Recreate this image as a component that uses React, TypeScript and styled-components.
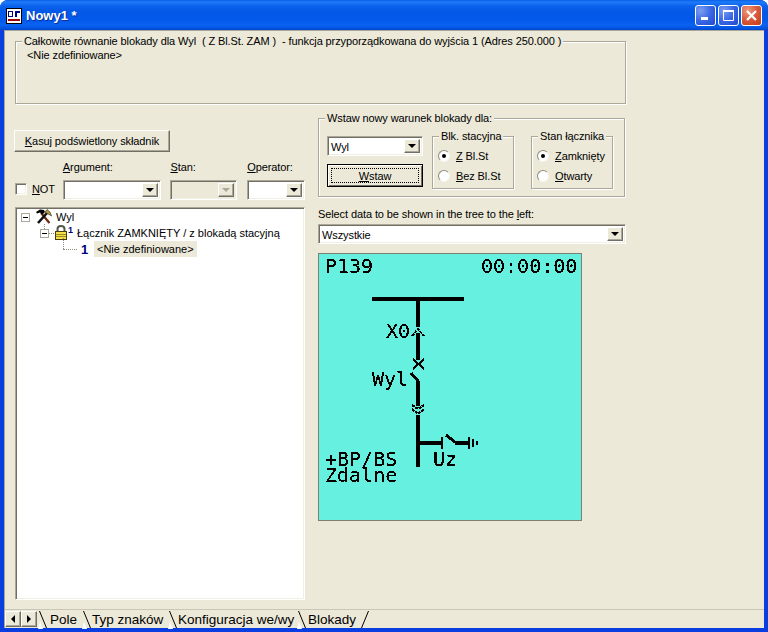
import React from "react";
import styled, { createGlobalStyle } from "styled-components";

const Global = createGlobalStyle`
  html, body { margin: 0; padding: 0; background: #fff; overflow: hidden; }
  #root { width: 768px; height: 632px; }
  * { box-sizing: border-box; }
`;

const Window = styled.div`
  width: 768px; height: 632px; display: flex; flex-direction: column;
  background: #0a3ee0; border-radius: 8px 8px 0 0; overflow: hidden;
  font: 11px "Liberation Sans", Arial, sans-serif; letter-spacing: -0.1px; color: #000;
`;
const TitleBar = styled.div`
  height: 30px; flex: none; display: flex; align-items: center; padding: 0 6px 0 6px;
  background: linear-gradient(180deg, #0a5fe8 0, #1d7bf6 2px, #1a76f5 3px, #0a62ec 6px, #0358e6 12px, #0359ea 20px, #0a63f2 25px, #0050dc 29px, #003fc4 30px);
`;
const AppIcon = styled.svg` width: 16px; height: 16px; flex: none; margin-top: 2px; `;
const Title = styled.div`
  flex: 1; margin-left: 4px; color: #fff; font: bold 13px "Liberation Sans", Arial, sans-serif; letter-spacing: 0;
  text-shadow: 1px 1px 0 #0a2f9c;
`;
const Controls = styled.div` display: flex; gap: 2px; margin-top: 1px; `;
const CtlBtn = styled.div<{ $close?: boolean }>`
  width: 21px; height: 21px; border: 1px solid #fff; border-radius: 3px;
  display: flex; align-items: center; justify-content: center;
  background: ${p => p.$close
    ? "radial-gradient(circle at 30% 25%, #ec9a80 0, #d8593a 50%, #c23a18 100%)"
    : "radial-gradient(circle at 25% 25%, #7c9df0 0, #3a68e4 50%, #2148cf 100%)"};
`;
const Client = styled.div`
  flex: 1; min-height: 0; margin: 0 4px 4px; display: flex; flex-direction: column;
  background: #ece9d8; border-top: 1px solid #a9a799; border-left: 1px solid #a9a799;
  padding: 10px 0 0 10px;
`;
const Group = styled.div`
  position: relative; border: 1px solid #aca899; box-shadow: 1px 1px 0 #fff, inset 1px 1px 0 #fff;
`;
const Legend = styled.span`
  position: absolute; top: -8px; left: 6px; padding: 0 2px; background: #ece9d8; white-space: pre; line-height: 14px;
`;
const SummaryGroup = styled(Group)`
  width: 611px; height: 63px; padding: 6px 0 0 11px; line-height: 14px; flex: none;
`;
const Body = styled.div` flex: 1; min-height: 0; display: flex; gap: 13px; padding-top: 14px; `;
const LeftCol = styled.div` width: 290px; display: flex; flex-direction: column; padding: 12px 0 9px; `;
const RightCol = styled.div` width: 308px; display: flex; flex-direction: column; `;
const Raised = styled.button`
  font: inherit; letter-spacing: inherit; color: #000; background: #ece9d8; padding: 0; margin: 0;
  border: 1px solid; border-color: #fff #716f64 #716f64 #fff;
  box-shadow: inset -1px -1px 0 #aca899;
`;
const DeleteBtn = styled(Raised)` width: 156px; height: 22px; margin-left: -1px; flex: none; `;
const Key = styled.span` text-decoration: underline; `;
const FieldRow = styled.div` display: flex; align-items: flex-end; margin-top: 8px; flex: none; `;
const NotBox = styled.div` width: 48px; height: 22px; display: flex; align-items: center; gap: 5px; `;
const Check = styled.div`
  width: 12px; height: 12px; flex: none; background: #fff; border: 1px solid; border-color: #aca899 #fff #fff #aca899;
  box-shadow: inset 1px 1px 0 #716f64, inset -1px -1px 0 #f1efe2;
`;
const Field = styled.div<{ $w: number }>` width: ${p => p.$w}px; display: flex; flex-direction: column; gap: 6px; `;
const FieldLabel = styled.div` height: 14px; line-height: 14px; `;
const Combo = styled.div<{ $w?: string; $off?: boolean }>`
  width: ${p => p.$w ?? "100%"}; height: 20px; display: flex; align-items: stretch; flex: none;
  background: ${p => p.$off ? "#ece9d8" : "#fff"}; padding: 2px; line-height: 16px;
  border: 1px solid; border-color: #aca899 #fff #fff #aca899;
  box-shadow: inset 1px 1px 0 #716f64, inset -1px -1px 0 #f1efe2;
`;
const WideCombo = styled(Combo)` margin-top: 3px; `;
const ComboText = styled.div` flex: 1; padding-left: 1px; `;
const ComboArrow = styled.div<{ $off?: boolean }>`
  width: 16px; flex: none; background: #ece9d8; display: flex; align-items: center; justify-content: center;
  border: 1px solid; border-color: #fff #716f64 #716f64 #fff; box-shadow: inset -1px -1px 0 #aca899;
  &::after { content: ""; border: 4px solid transparent; border-bottom: 0; border-top: 4px solid ${p => p.$off ? "#aca899" : "#000"}; }
`;
const Tree = styled.div`
  flex: 1; margin-top: 7px; background: #fff; padding: 1px 0 0 0; line-height: 16px;
  border: 1px solid; border-color: #aca899 #fff #fff #aca899;
  box-shadow: inset 1px 1px 0 #716f64, inset -1px -1px 0 #f1efe2;
`;
const TreeRow = styled.div<{ $indent: number }>`
  position: relative; height: 16px; display: flex; align-items: center; padding-left: ${p => p.$indent}px;
`;
const Expander = styled.div`
  width: 9px; height: 9px; flex: none; border: 1px solid #aca899; background: #fff; position: relative;
  &::after { content: ""; position: absolute; left: 1px; right: 1px; top: 3px; height: 1px; background: #000; }
`;
const DotH = styled.div<{ $w: number }>` width: ${p => p.$w}px; height: 1px; flex: none; border-top: 1px dotted #8e8e80; `;
const DotV = styled.div<{ $l: number; $t: number; $h: number }>`
  position: absolute; left: ${p => p.$l}px; top: ${p => p.$t}px; height: ${p => p.$h}px; border-left: 1px dotted #8e8e80;
`;
const TreeIcon = styled.svg` flex: none; `;
const HammerIcon = styled(TreeIcon)` margin-left: 5px; `;
const TreeText = styled.span<{ $ml: number }>` margin-left: ${p => p.$ml}px; white-space: nowrap; letter-spacing: 0; `;
const NodeNum = styled.span` color: #000080; font: bold 13px "Liberation Sans", Arial, sans-serif; margin-left: 4px; width: 13px; `;
const Selected = styled.span` background: #ece9d8; padding: 0 3px; height: 16px; line-height: 16px; white-space: nowrap; letter-spacing: 0; `;
const InsertGroup = styled(Group)` width: 307px; height: 79px; display: flex; padding: 17px 0 0 8px; flex: none; `;
const InsertCol = styled.div` width: 96px; display: flex; flex-direction: column; gap: 8px; `;
const FocusBtn = styled(Raised)`
  width: 96px; height: 23px; border: 1px solid #000; box-shadow: inset 1px 1px 0 #fff, inset -1px -1px 0 #716f64;
  padding: 3px; display: flex;
`;
const FocusInner = styled.span` flex: 1; border: 1px dotted #000; display: flex; align-items: center; justify-content: center; `;
const SubGroup = styled(Group)<{ $ml: number }>` width: 82px; height: 53px; margin-left: ${p => p.$ml}px; padding: 12px 0 0 5px; display: flex; flex-direction: column; gap: 7px; `;
const RadioRow = styled.div` height: 13px; display: flex; align-items: center; gap: 6px; white-space: nowrap; `;
const Radio = styled.div<{ $on?: boolean }>`
  width: 12px; height: 12px; flex: none; position: relative; border-radius: 50%; background: #fff;
  border: 1px solid; border-color: #8d8b7f #f6f5ee #f6f5ee #8d8b7f;
  &::after { content: ""; display: ${p => p.$on ? "block" : "none"}; position: absolute; left: 3px; top: 3px; width: 4px; height: 4px; border-radius: 50%; background: #000; }
`;
const SelectLabel = styled.div` margin-top: 10px; line-height: 14px; `;
const Lcd = styled.svg`
  display: block; width: 264px; height: 268px; margin-top: 9px; border: 1px solid #7f7f70; background: #66f0e0;
`;
const TabBar = styled.div`
  height: 19px; flex: none; margin: auto 0 0 -10px; display: flex; align-items: flex-start; padding-top: 1px;
  font-size: 13.5px; letter-spacing: 0; border-top: 1px solid #c9c6b6;
`;
const ScrollBtn = styled(Raised)` width: 16px; height: 16px; display: flex; align-items: center; justify-content: center; `;
const TabStrip = styled.div` margin-left: 1px; display: flex; height: 17px; `;
const Tab = styled.div<{ $w: number; $pad: number }>`
  width: ${p => p.$w}px; display: flex; align-items: center; position: relative; white-space: nowrap; padding-left: ${p => p.$pad}px; line-height: 15px;
`;
const Slant = styled.svg` position: absolute; left: 0; top: 0; `;
const EndSlant = styled.svg` position: absolute; right: 0; top: 0; `;

const SlashL = () => (
  <Slant width="10" height="18"><path d="M1.5 0 L8.5 17" stroke="#000" fill="none" /><path d="M0 18 L5 18 L2 11Z" fill="#fff" /></Slant>
);

const Minimize = () => <svg width="11" height="11"><rect x="1" y="7" width="7" height="3" fill="#fff" /></svg>;
const Maximize = () => <svg width="13" height="13"><path d="M1.5 1.5h10v10h-10z" fill="none" stroke="#fff" /><rect x="1" y="1" width="11" height="2" fill="#fff" /></svg>;
const Close = () => <svg width="13" height="13"><path d="M2 2 L11 11 M11 2 L2 11" stroke="#fff" strokeWidth="2.2" /></svg>;

const Hammer = () => (
  <HammerIcon width="17" height="16" viewBox="0 0 17 16">
    <path d="M6 4 L14.5 14" stroke="#6a2a10" strokeWidth="2.2" />
    <path d="M1 3 L5 0.5 L9 1 L10 3 L7.5 5.5 L5 3.5 L2 4.5Z" fill="#000" />
    <path d="M12 4 L3 14" stroke="#111" strokeWidth="2.6" />
    <path d="M10 3 L12 0.5 L15 3 L16.5 7 L15 6 L13 5Z" fill="#b89a3a" stroke="#222" strokeWidth="0.6" />
  </HammerIcon>
);
const Lock = () => (
  <TreeIcon width="14" height="16" viewBox="0 0 14 16">
    <path d="M3.5 7 V4 C3.5 0 10.5 0 10.5 4 V7" fill="none" stroke="#55554a" strokeWidth="2" />
    <rect x="1.5" y="6.5" width="11" height="8" fill="#f5e04a" stroke="#4a3f08" />
    <path d="M2 9.5h10M2 11.5h10" stroke="#9a8a20" />
  </TreeIcon>
);
const Sup = styled.span` position: absolute; left: 52px; top: 0; color: #000080; font-size: 9px; font-weight: bold; line-height: 10px; `;

export default function App() {
  const sharp = { filter: "url(#lcdSharp)", fontFamily: '"DejaVu Sans Mono", monospace', fontSize: 20, fill: "#000", letterSpacing: 0 } as const;
  const T = (x: number, y: number, s: string) => <text x={x - 319} y={y - 254} style={sharp}>{s}</text>;
  const R = (x: number, y: number, w: number, h: number) => <rect x={x - 319} y={y - 254} width={w} height={h} fill="#000" shapeRendering="crispEdges" />;
  const L = (d: [number, number][], w: number, dash?: string) => (
    <path
      d={d.map((p, i) => `${i ? "L" : "M"}${p[0] - 319} ${p[1] - 254}`).join(" ")}
      fill="none" stroke="#000" strokeWidth={w} strokeDasharray={dash} shapeRendering="crispEdges"
    />
  );
  return (
    <Window>
      <Global />
      <TitleBar>
        <AppIcon viewBox="0 0 16 16">
          <rect x="0.5" y="0.5" width="15" height="15" fill="#fff" stroke="#000" />
          <path d="M2 3h5v6H2z M3 4v4h3V4z M9 3h5v2H11v4H9z" fill="#000080" fillRule="evenodd" />
          <rect x="2" y="11" width="12" height="2" fill="#a00000" />
        </AppIcon>
        <Title>Nowy1 *</Title>
        <Controls>
          <CtlBtn><Minimize /></CtlBtn>
          <CtlBtn><Maximize /></CtlBtn>
          <CtlBtn $close><Close /></CtlBtn>
        </Controls>
      </TitleBar>
      <Client>
        <SummaryGroup>
          <Legend>Całkowite równanie blokady dla Wyl  ( Z Bl.St. ZAM )  - funkcja przyporządkowana do wyjścia 1 (Adres 250.000 )</Legend>
          {"<Nie zdefiniowane>"}
        </SummaryGroup>
        <Body>
          <LeftCol>
            <DeleteBtn><Key>K</Key>asuj podświetlony składnik</DeleteBtn>
            <FieldRow>
              <NotBox><Check /><span><Key>N</Key>OT</span></NotBox>
              <Field $w={108}>
                <FieldLabel><Key>A</Key>rgument:</FieldLabel>
                <Combo $w="98px"><ComboText /><ComboArrow /></Combo>
              </Field>
              <Field $w={77}>
                <FieldLabel><Key>S</Key>tan:</FieldLabel>
                <Combo $w="67px" $off><ComboText /><ComboArrow $off /></Combo>
              </Field>
              <Field $w={58}>
                <FieldLabel><Key>O</Key>perator:</FieldLabel>
                <Combo><ComboText /><ComboArrow /></Combo>
              </Field>
            </FieldRow>
            <Tree>
              <TreeRow $indent={5}>
                <Expander /><Hammer /><TreeText $ml={4}>Wyl</TreeText>
              </TreeRow>
              <TreeRow $indent={24}>
                <DotV $l={28} $t={-1} $h={5} />
                <Expander /><DotH $w={5} /><Lock /><Sup>1</Sup><TreeText $ml={9}>Łącznik ZAMKNIĘTY / z blokadą stacyjną</TreeText>
              </TreeRow>
              <TreeRow $indent={47}>
                <DotV $l={47} $t={-3} $h={11} />
                <DotH $w={14} /><NodeNum>1</NodeNum><Selected>{"<Nie zdefiniowane>"}</Selected>
              </TreeRow>
            </Tree>
          </LeftCol>
          <RightCol>
            <InsertGroup>
              <Legend>Wstaw nowy warunek blokady dla:</Legend>
              <InsertCol>
                <Combo><ComboText>Wyl</ComboText><ComboArrow /></Combo>
                <FocusBtn><FocusInner><Key>W</Key>staw</FocusInner></FocusBtn>
              </InsertCol>
              <SubGroup $ml={9}>
                <Legend>Blk. stacyjna</Legend>
                <RadioRow><Radio $on /><span><Key>Z</Key> Bl.St</span></RadioRow>
                <RadioRow><Radio /><span><Key>B</Key>ez Bl.St</span></RadioRow>
              </SubGroup>
              <SubGroup $ml={17}>
                <Legend>Stan łącznika</Legend>
                <RadioRow><Radio $on /><span><Key>Z</Key>amknięty</span></RadioRow>
                <RadioRow><Radio /><span><Key>O</Key>twarty</span></RadioRow>
              </SubGroup>
            </InsertGroup>
            <SelectLabel>Select data to be shown in the tree to the <Key>l</Key>eft:</SelectLabel>
            <WideCombo><ComboText>Wszystkie</ComboText><ComboArrow /></WideCombo>
            <Lcd viewBox="0 0 262 266">
              <defs>
                <filter id="lcdSharp" x="-5%" y="-5%" width="110%" height="110%">
                  <feComponentTransfer>
                    <feFuncA type="discrete" tableValues="0 0 1 1 1" />
                  </feComponentTransfer>
                </filter>
              </defs>
              {T(325, 273, "P139")}
              {T(481, 273, "00:00:00")}
              {T(386, 338, "X0")}
              {T(372, 386, "Wyl")}
              {T(433, 466, "Uz")}
              {T(325, 466, "+BP/BS")}
              {T(325, 482, "Zdalne")}
              {R(372, 297, 92, 4)}
              {R(416, 301, 4, 26)}
              {L([[412, 336], [418, 329], [424, 336]], 2, "3 1")}
              {R(416, 333, 4, 27)}
              {L([[413, 359], [424, 369]], 2)}
              {L([[424, 359], [413, 369]], 2)}
              {L([[411, 373], [418, 381]], 3)}
              {R(416, 381, 4, 25)}
              {L([[412, 405], [418, 409], [424, 405]], 2, "3 1")}
              {L([[412, 409], [418, 414], [424, 409]], 2, "3 1")}
              {R(416, 415, 4, 52)}
              {R(420, 441, 21, 4)}
              {R(441, 437, 2, 12)}
              {L([[446, 435], [455, 442]], 3)}
              {R(455, 441, 13, 4)}
              {R(468, 437, 2, 12)}
              {R(472, 439, 2, 8)}
              {R(476, 441, 2, 4)}
            </Lcd>
          </RightCol>
        </Body>
        <TabBar>
          <ScrollBtn><svg width="6" height="8"><path d="M5 0v8L1 4z" fill="#000" /></svg></ScrollBtn>
          <ScrollBtn><svg width="6" height="8"><path d="M1 0v8l4-4z" fill="#000" /></svg></ScrollBtn>
          <TabStrip>
            <Tab $w={44} $pad={12}><SlashL />Pole</Tab>
            <Tab $w={86} $pad={10}><SlashL />Typ znaków</Tab>
            <Tab $w={129} $pad={10}><SlashL />Konfiguracja we/wy</Tab>
            <Tab $w={73} $pad={11}><SlashL />Blokady<EndSlant width="10" height="18"><path d="M8.5 0 L1.5 17" stroke="#000" fill="none" /></EndSlant></Tab>
          </TabStrip>
        </TabBar>
      </Client>
    </Window>
  );
}
